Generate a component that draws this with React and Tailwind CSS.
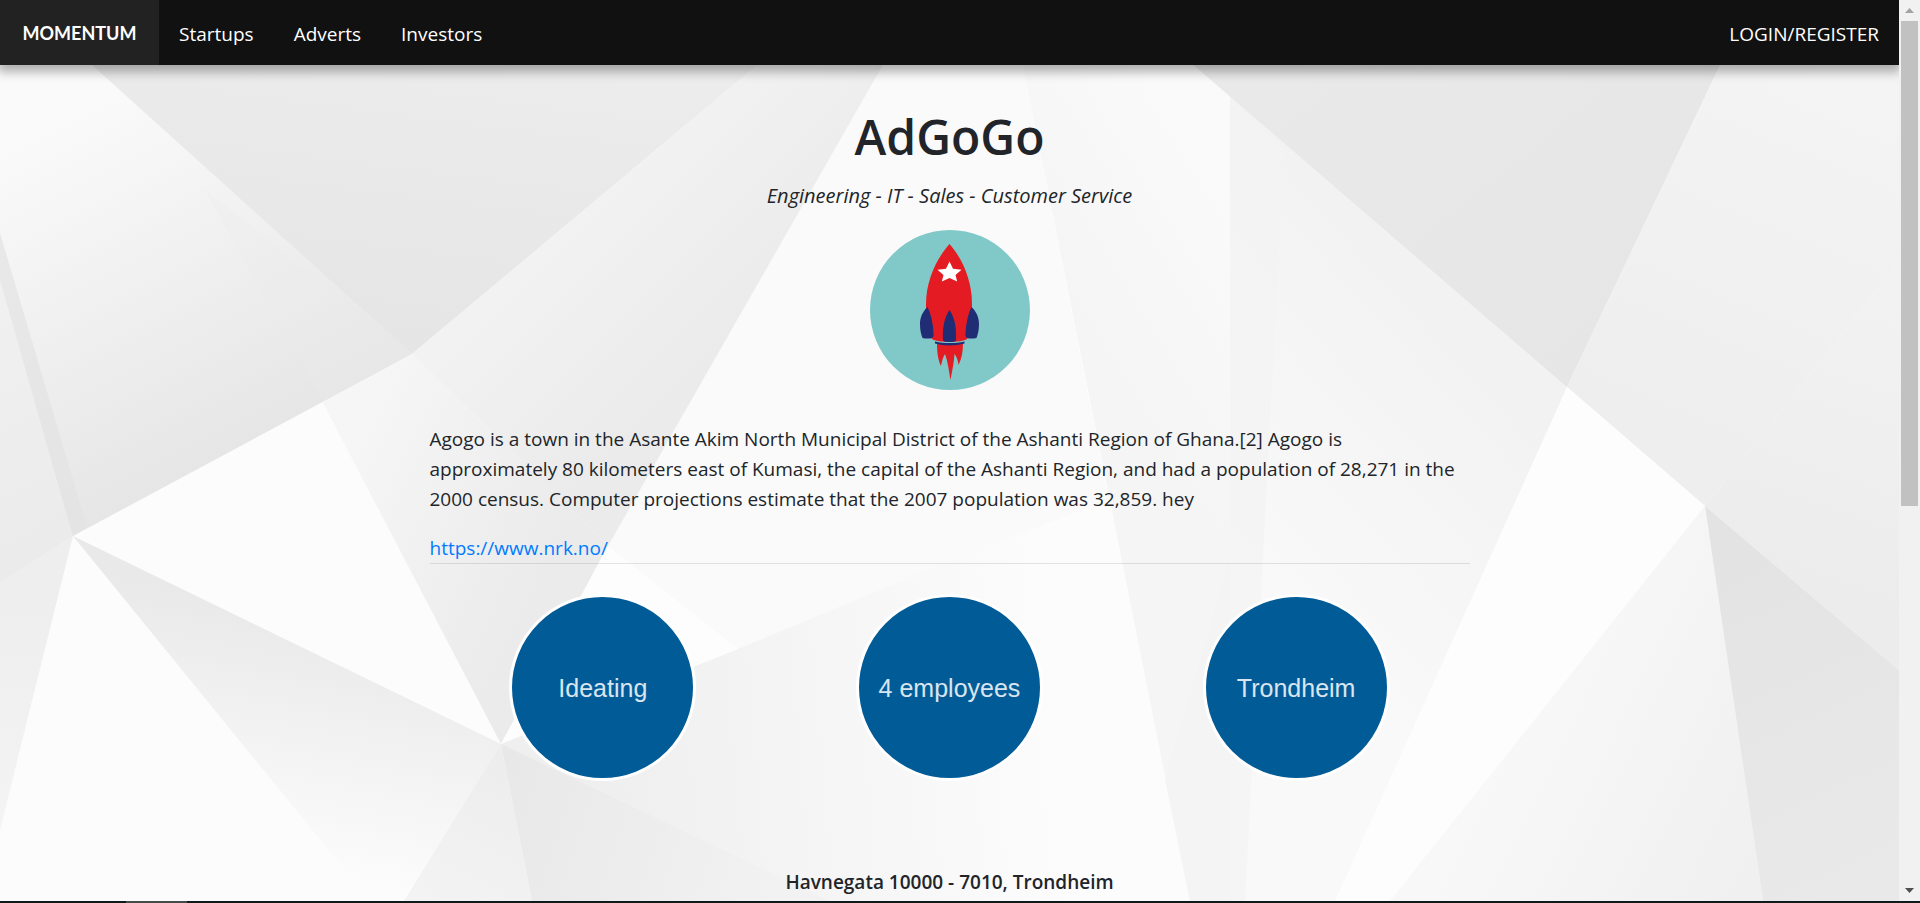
const facts = ["Ideating", "4 employees", "Trondheim"];
const links = ["Startups", "Adverts", "Investors"];

function Gradient({ id, from, to, x1, y1, x2, y2 }) {
  return (
    <linearGradient id={id} gradientUnits="userSpaceOnUse" x1={x1} y1={y1} x2={x2} y2={y2}>
      <stop offset="0" stopColor={from} />
      <stop offset="1" stopColor={to} />
    </linearGradient>
  );
}

function Backdrop() {
  return (
    <svg
      className="absolute inset-0 h-full w-full"
      viewBox="0 0 1899 901"
      preserveAspectRatio="none"
      aria-hidden="true"
    >
      <defs>
        <Gradient id="a" from="#fafafa" to="#e6e6e6" x1="60" y1="120" x2="230" y2="455" />
        <Gradient id="b" from="#ececec" to="#e5e5e5" x1="450" y1="60" x2="412" y2="354" />
        <Gradient id="c" from="#f2f2f2" to="#ebebeb" x1="560" y1="230" x2="700" y2="370" />
        <Gradient id="d" from="#f6f6f6" to="#ebebeb" x1="350" y1="440" x2="560" y2="540" />
        <Gradient id="e" from="#e9e9e9" to="#fcfcfc" x1="240" y1="600" x2="190" y2="850" />
        <Gradient id="f" from="#eeeeee" to="#f4f4f4" x1="0" y1="600" x2="0" y2="830" />
        <Gradient id="g" from="#e8e8e8" to="#f2f2f2" x1="500" y1="760" x2="790" y2="860" />
        <Gradient id="q" from="#ededed" to="#f3f3f3" x1="500" y1="760" x2="430" y2="901" />
        <Gradient id="h" from="#efefef" to="#fcfcfc" x1="600" y1="700" x2="1050" y2="660" />
        <Gradient id="i" from="#f5f5f5" to="#fafafa" x1="1070" y1="300" x2="1230" y2="200" />
        <Gradient id="j" from="#f9f9f9" to="#f2f2f2" x1="1240" y1="560" x2="1480" y2="340" />
        <Gradient id="k" from="#e9e9e9" to="#e6e6e6" x1="1300" y1="60" x2="1560" y2="380" />
        <Gradient id="l" from="#f4f4f4" to="#eeeeee" x1="1800" y1="60" x2="1650" y2="420" />
        <Gradient id="m" from="#f2f2f2" to="#ececec" x1="1899" y1="300" x2="1800" y2="590" />
        <Gradient id="n" from="#f8f8f8" to="#f0f0f0" x1="1500" y1="750" x2="1750" y2="870" />
        <Gradient id="o" from="#e3e3e3" to="#e9e9e9" x1="1710" y1="550" x2="1860" y2="880" />
      </defs>
      <rect width="1899" height="901" fill="#fcfcfc" />
      <path fill="url(#a)" d="M0 0H25L412 354L73 536L0 583Z" />
      <path fill="#ebebeb" opacity=".25" d="M205 190L412 354L323 403Z" />
      <path fill="#efefef" opacity=".6" d="M0 280L73 536L0 583Z" />
      <path fill="#e2e2e2" opacity=".7" d="M0 233L87 527L73 536L0 280Z" />
      <path fill="url(#b)" d="M20 0H835L412 354Z" />
      <path fill="url(#c)" d="M835 0H920L608 546L412 354Z" />
      <path fill="url(#d)" d="M412 354L608 546L501 744L323 403Z" />
      <path fill="#f7f7f7" opacity=".5" d="M920 0L608 546L738 649L960 557L1108 500L1010 0Z" />
      <path fill="#fdfdfd" d="M608 546L738 649L501 744Z" />
      <path fill="url(#e)" d="M73 536L501 744L430 901H370Z" />
      <path fill="url(#f)" d="M73 536L0 830V583Z" />
      <path fill="url(#h)" d="M501 744L738 649L960 557L1108 500L1190 901H532Z" />
      <path fill="url(#g)" d="M501 744L830 901H532Z" />
      <path fill="url(#q)" d="M501 744L532 901H404Z" />
      <path fill="url(#i)" d="M1010 0H1231V901H1190Z" />
      <path fill="url(#j)" d="M1230 90L1569 385L1340 901H1230Z" />
      <path fill="#f3f3f3" d="M1230 97L1284 150L1245 901H1190L1165 780L1230 560Z" opacity=".75" />
      <path fill="url(#k)" d="M1118 0H1751L1567 387Z" />
      <path fill="url(#l)" d="M1751 0H1899V262L1705 506L1567 387Z" />
      <path fill="url(#m)" d="M1899 262V670L1705 506Z" />
      <path fill="#fdfdfd" d="M1567 387L1705 506L1390 901H1335Z" />
      <path fill="url(#n)" d="M1705 506L1763 901H1390Z" />
      <path fill="url(#o)" d="M1705 506L1899 670V901H1763Z" />
    </svg>
  );
}

function Rocket() {
  return (
    <svg className="h-40 w-40" viewBox="0 0 160 160" role="img" aria-label="Rocket">
      <circle cx="80" cy="80" r="80" fill="#80c9c8" />
      <path fill="#e51b24" d="M67 113C67 122 68 130 71 136C72 131 73 127 75 124C78 132 79 142 80.500 150C82 141 84 133 84.500 124C87 127 88 131 88.500 135C92 128 93 121 93 113Z" />
      <path fill="#e51b24" d="M79.500 14C67 28 56 50 56 74C56 90 57 103 62 109C67 113 92 113 97 109C102 103 102 90 102 74C102 50 92 28 79.500 14Z" />
      <path fill="#202c74" d="M65 111.500C74 113.500 85 113.500 94.500 111.500V113.500C85 116 74 116 65 113.500Z" />
      <path fill="#202c74" d="M57.500 77C51 83 50 90 50 94C50 100 51 104 52.500 108Q58 109 62 108Q64 107 63.500 103C63 93 61 84 57.500 77Z" />
      <path fill="#202c74" d="M101.500 77C108 83 109 90 109 94C109 100 108 104 106.500 108Q101 109 97 108Q95 107 95.500 103C96 93 98 84 101.500 77Z" />
      <path fill="#202c74" d="M79.500 80C74 88 72.500 98 73 110Q73 112 79.500 112Q86 112 86 110C86.500 98 85 88 79.500 80Z" />
      <path fill="#fff" d="M79.500 31.500L83 38.700L91.500 39.800L85.500 45L87.200 51.500L79.500 48L71.800 51.500L73.500 45L67.500 39.800L76 38.700Z" />
    </svg>
  );
}

function ScrollTrack() {
  return (
    <div className="flex w-[21px] shrink-0 flex-col items-center bg-[#f1f1f1]" aria-hidden="true">
      <div className="flex h-[21px] shrink-0 items-center">
        <svg className="h-[5px] w-[9px]" viewBox="0 0 9 5"><path d="M4.500 0L9 5H0Z" fill="#a3a3a3" /></svg>
      </div>
      <div className="w-[17px] basis-[485px] bg-[#c1c1c1]" />
      <div className="flex-1" />
      <div className="flex h-[21px] shrink-0 items-center">
        <svg className="h-[5px] w-[9px]" viewBox="0 0 9 5"><path d="M0 0H9L4.500 5Z" fill="#505050" /></svg>
      </div>
    </div>
  );
}

export default function App() {
  return (
    <div className="flex h-screen flex-col overflow-hidden font-['Open_Sans','Noto_Sans',sans-serif] text-[19px] leading-[30px] text-[#212529]">
      <div className="flex min-h-0 flex-1">
        <div className="relative flex min-w-0 flex-1 flex-col overflow-hidden">
          <Backdrop />
          <header className="relative flex h-[65px] shrink-0 items-stretch bg-[#111] text-white shadow-[0_5px_10px_2px_rgba(0,0,0,0.3)]">
            <a href="#home" className="flex w-[159px] items-center justify-center bg-[#222] font-['Lato',sans-serif] text-lg font-bold">
              MOMENTUM
            </a>
            <nav className="flex">
              {links.map((label) => (
                <a key={label} href={"#" + label.toLowerCase()} className="flex items-center px-5 pt-0.5 text-[19px]">
                  {label}
                </a>
              ))}
            </nav>
            <a href="#login" className="ml-auto flex items-center px-5 pt-0.5">LOGIN/REGISTER</a>
          </header>
          <main className="relative mx-auto flex w-full max-w-[1040px] flex-col">
            <h1 className="mt-[42px] text-center text-5xl leading-[60px] font-semibold">AdGoGo</h1>
            <p className="mt-3.5 text-center text-xl leading-[30px] italic">Engineering - IT - Sales - Customer Service</p>
            <div className="mt-[19px] flex justify-center"><Rocket /></div>
            <p className="mt-[34px]">
              Agogo is a town in the Asante Akim North Municipal District of the Ashanti Region of Ghana.[2] Agogo is
              approximately 80 kilometers east of Kumasi, the capital of the Ashanti Region, and had a population of 28,271
              in the 2000 census. Computer projections estimate that the 2007 population was 32,859. hey
            </p>
            <div className="mt-5 border-b border-black/10 leading-[29px]">
              <a href="https://www.nrk.no/" className="text-[#007bff]">https://www.nrk.no/</a>
            </div>
            <ul className="mt-[30px] grid grid-cols-3 justify-items-center font-['Liberation_Sans',Arial,sans-serif] text-[25px] text-white/85">
              {facts.map((fact) => (
                <li key={fact} className="flex h-[187px] w-[187px] items-center justify-center rounded-full border-3 border-white bg-[#005b97]">
                  {fact}
                </li>
              ))}
            </ul>
            <p className="mt-[86px] text-center font-semibold">Havnegata 10000 - 7010, Trondheim</p>
          </main>
        </div>
        <ScrollTrack />
      </div>
      <div className="flex h-[2px] shrink-0 bg-[#0e1b1b]">
        <div className="ml-[126px] w-[61px] bg-[#454b4b]" />
      </div>
    </div>
  );
}
